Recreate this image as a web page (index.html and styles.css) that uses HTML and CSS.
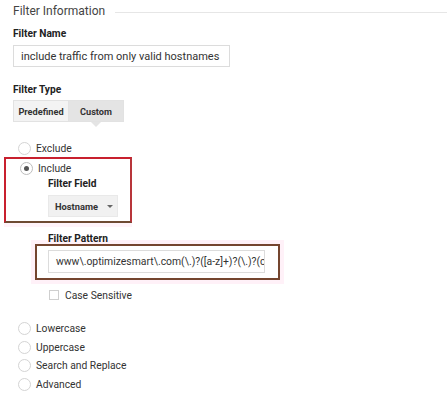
FILE: index.html
```html
<!DOCTYPE html>
<html>
<head>
<meta charset="utf-8">
<link rel="stylesheet" href="styles.css">
</head>
<body>
<div class="page">
  <div class="section-head">
    <span class="section-title">Filter Information</span>
    <span class="section-rule"></span>
  </div>

  <div class="label label-name">Filter Name</div>
  <div class="text-input name-input">include traffic from only valid hostnames</div>

  <div class="label label-type">Filter Type</div>
  <div class="toggle">
    <span class="toggle-btn">Predefined</span>
    <span class="toggle-btn active">Custom</span>
  </div>

  <div class="radio-row exclude-row"><span class="radio"></span><span class="radio-label">Exclude</span></div>

  <div class="include-box">
    <div class="radio-row include-row"><span class="radio checked"></span><span class="radio-label">Include</span></div>
    <div class="sub">
      <div class="label">Filter Field</div>
      <div class="dropdown"><span>Hostname</span><span class="caret"></span></div>
    </div>
  </div>

  <div class="pattern">
    <div class="label pattern-label">Filter Pattern</div>
  </div>
  <div class="pattern-box">
    <div class="text-input pattern-input">www\.optimizesmart\.com(\.)?([a-z]+)?(\.)?(c</div>
  </div>
  <div class="check-row"><span class="checkbox"></span><span class="check-label">Case Sensitive</span></div>

  <div class="radio-list">
    <div class="radio-row list-row"><span class="radio"></span><span class="radio-label">Lowercase</span></div>
    <div class="radio-row list-row"><span class="radio"></span><span class="radio-label">Uppercase</span></div>
    <div class="radio-row list-row"><span class="radio"></span><span class="radio-label">Search and Replace</span></div>
    <div class="radio-row list-row"><span class="radio"></span><span class="radio-label">Advanced</span></div>
  </div>
</div>
</body>
</html>
```

FILE: styles.css
```css
* { box-sizing: border-box; }
html, body { margin: 0; padding: 0; background: #fff; }
body {
  font-family: Roboto, "Liberation Sans", Arial, sans-serif;
  color: #333;
  font-size: 11px;
  width: 447px;
  height: 400px;
  overflow: hidden;
}
.page { padding-left: 13px; }

.section-head {
  display: flex;
  align-items: center;
  height: 22px;
}
.section-title {
  font-size: 12px;
  color: #444;
  line-height: 22px;
}
.section-rule {
  flex: 1;
  height: 1px;
  background: #e6e6e6;
  margin-left: 10px;
  margin-top: 2px;
}

.label {
  font-weight: 700;
  font-size: 10.2px;
  line-height: 14px;
  color: #222;
}
.label-name { margin-top: 5px; }
.label-type { margin-top: 16px; }

.text-input {
  border: 1px solid #dcdcdc;
  background: #fff;
  font-size: 11px;
  color: #333;
  display: flex;
  align-items: center;
  white-space: nowrap;
  overflow: hidden;
}
.name-input {
  margin-top: 4px;
  width: 217px;
  height: 22px;
  padding-left: 7px;
}

.toggle {
  display: flex;
  margin-top: 3px;
  height: 22px;
}
.toggle-btn {
  display: flex;
  align-items: center;
  justify-content: center;
  font-weight: 700;
  font-size: 9.2px;
  color: #333;
  background: #f3f3f3;
  border: 1px solid #e2e2e2;
  height: 22px;
  width: 56px;
}
.toggle-btn + .toggle-btn { border-left: none; }
.toggle-btn.active {
  background: #e4e4e4;
  width: 55px;
  position: relative;
}
.toggle-btn.active::after {
  content: "";
  position: absolute;
  left: 50%;
  top: 21px;
  margin-left: -5px;
  border-left: 5px solid transparent;
  border-right: 5px solid transparent;
  border-top: 5px solid #e4e4e4;
}

.radio-row {
  display: flex;
  align-items: center;
  height: 19px;
  padding-left: 5px;
}
.exclude-row { margin-top: 17px; }
.radio {
  width: 13px;
  height: 13px;
  border-radius: 50%;
  border: 1px solid #d4d4d4;
  background: #fff;
  flex: none;
  display: flex;
  align-items: center;
  justify-content: center;
}
.radio.checked { border-color: #bdbdbd; }
.radio.checked::after {
  content: "";
  width: 5px;
  height: 5px;
  border-radius: 50%;
  background: #555;
}
.radio-label {
  margin-left: 5px;
  font-size: 10.3px;
  color: #333;
}

.include-box {
  margin-top: -1px;
  margin-left: -9px;
  width: 128px;
  border: 2px solid #c8202e;
  border-bottom-color: #6e4a32;
  border-right-color: #b8353a;
  padding-bottom: 4px;
  padding-left: 9px;
  box-shadow: 0 4px 0 0 rgba(255, 225, 240, 0.4);
}
.include-row { height: 18px; }
.sub { padding-left: 33px; }
.dropdown {
  margin-top: 4px;
  width: 70px;
  height: 22px;
  background: #f1f1f1;
  border: 1px solid #e9e9e9;
  display: flex;
  align-items: center;
  padding-left: 6px;
  font-weight: 700;
  font-size: 9.3px;
  color: #333;
}
.caret {
  margin-left: 9px;
  width: 0;
  height: 0;
  border-left: 3px solid transparent;
  border-right: 3px solid transparent;
  border-top: 3px solid #666;
}

.pattern { padding-left: 35px; margin-top: 10px; }
.pattern-label { line-height: 12px; }
.pattern-box {
  margin-top: -1px;
  margin-left: 22px;
  width: 245px;
  border: 2px solid #74452f;
  padding: 4px 13px 5px 11px;
  box-shadow: 0 0 0 4px rgba(255, 228, 242, 0.5);
}
.pattern-input {
  height: 23px;
  padding-left: 7px;
  font-size: 10.4px;
}

.check-row {
  display: flex;
  align-items: center;
  height: 14px;
  margin-top: 8px;
  padding-left: 36px;
}
.checkbox {
  width: 10px;
  height: 10px;
  border: 1px solid #cfcfcf;
  background: #fff;
}
.check-label { margin-left: 6px; font-size: 10.3px; }

.radio-list { margin-top: 17px; }
.list-row { height: 18.7px; }
```
